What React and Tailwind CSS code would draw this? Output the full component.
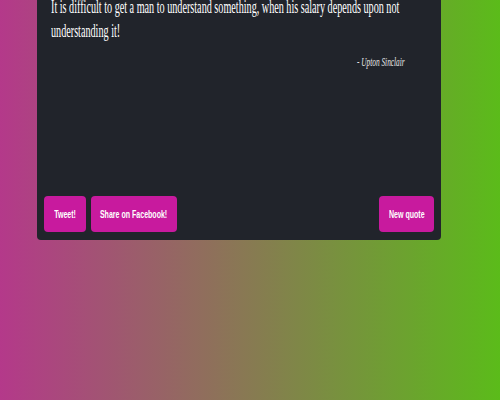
import React from "react";

const quote = {
  text: "It is difficult to get a man to understand something, when his salary depends upon not understanding it!",
  author: "Upton Sinclair",
};

// condensed look of the original font is faked with a horizontal scale
const Btn = ({ label, width }) => (
  <button
    type="button"
    className={`${width} h-[36px] flex items-center justify-center rounded-[4px] bg-[#c81a9e] text-white`}
  >
    <span className="whitespace-nowrap scale-x-[0.64] text-[11px] font-bold font-['Liberation_Sans',sans-serif]">
      {label}
    </span>
  </button>
);

const App = () => {
  return (
    <div className="w-[500px] h-[400px] overflow-hidden bg-linear-to-r/srgb from-[#b4398a] to-[#5bbb1a]">
      <div className="ml-[37px] -mt-[20px] w-[404px] h-[260px] flex flex-col justify-between rounded-[4px] bg-[#21242b]">
        <div className="pl-[14px] pt-[15px] w-[368px]">
          <div className="w-[626px] origin-top-left scale-x-[0.565] text-white font-['Liberation_Serif',serif]">
            <p className="text-[18px] leading-[24px]">{quote.text}</p>
            <p className="mt-[11px] text-right italic text-[13px] leading-[16px] text-[#e8e8e8]">
              - {quote.author}
            </p>
          </div>
        </div>

        <div className="flex items-center px-[7px] pb-[8px]">
          <div className="flex gap-[5px]">
            <Btn label="Tweet!" width="w-[42px]" />
            <Btn label="Share on Facebook!" width="w-[86px]" />
          </div>
          <div className="ml-auto">
            <Btn label="New quote" width="w-[55px]" />
          </div>
        </div>
      </div>
    </div>
  );
};

export default App;
